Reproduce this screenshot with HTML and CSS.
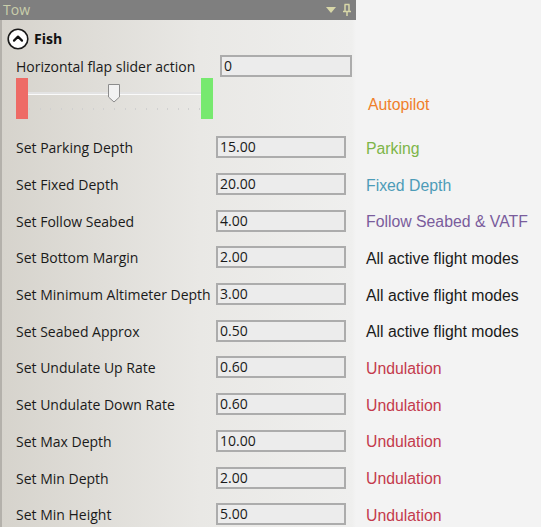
FILE: index.html
```html
<!DOCTYPE html>
<html>
<head>
<meta charset="utf-8">
<link rel="stylesheet" href="styles.css">
</head>
<body>
<div class="titlebar">
  <span class="title">Tow</span>
  <span class="tb-icons">
    <svg width="12" height="8" viewBox="0 0 12 8"><path d="M1 1 L11 1 L6 7 Z" fill="#d8d7a8"/></svg>
    <svg width="10" height="14" viewBox="0 0 10 14"><path d="M2.5 1.5 H7.5 M3 1.5 V8 M7 1.5 V8 M1 8.5 H9 M5 8.5 V13" stroke="#d8d7a8" stroke-width="1.5" fill="none"/></svg>
  </span>
</div>
<div class="panel">
  <div class="section-head">
    <svg class="collapse" width="22" height="22" viewBox="0 0 22 22"><circle cx="11" cy="11" r="9.8" fill="#fff" stroke="#1a1a1a" stroke-width="1.6"/><path d="M7 12.6 L11 8.6 L15 12.6" fill="none" stroke="#111" stroke-width="2.2" stroke-linecap="round" stroke-linejoin="round"/></svg>
    <span class="section-title">Fish</span>
  </div>
  <div class="flap">
    <div class="flap-left">
      <div class="flap-row">
        <span class="flap-label">Horizontal flap slider action</span>
        <div class="box box-wide">0</div>
      </div>
      <div class="slider">
        <div class="end end-red"></div>
        <div class="track">
          <div class="line"></div>
          <svg class="thumb" width="14" height="20" viewBox="0 0 14 20"><path d="M1.5 1.5 H12.5 V14 L7 19 L1.5 14 Z" fill="#f2f2f2" stroke="#8c8c8c" stroke-width="1"/></svg>
          <div class="ticks"><i></i><i></i><i></i><i></i><i></i><i></i><i></i><i></i><i></i><i></i><i></i><i></i><i></i><i></i><i></i><i></i><i></i></div>
        </div>
        <div class="end end-green"></div>
      </div>
    </div>
    <div class="mode autopilot">Autopilot</div>
  </div>
  <div class="rows">
    <span class="lbl">Set Parking Depth</span><div class="box">15.00</div><span class="mode parking">Parking</span>
    <span class="lbl">Set Fixed Depth</span><div class="box">20.00</div><span class="mode fixed">Fixed Depth</span>
    <span class="lbl">Set Follow Seabed</span><div class="box">4.00</div><span class="mode follow">Follow Seabed &amp; VATF</span>
    <span class="lbl">Set Bottom Margin</span><div class="box">2.00</div><span class="mode all">All active flight modes</span>
    <span class="lbl">Set Minimum Altimeter Depth</span><div class="box">3.00</div><span class="mode all">All active flight modes</span>
    <span class="lbl">Set Seabed Approx</span><div class="box">0.50</div><span class="mode all">All active flight modes</span>
    <span class="lbl">Set Undulate Up Rate</span><div class="box">0.60</div><span class="mode und">Undulation</span>
    <span class="lbl">Set Undulate Down Rate</span><div class="box">0.60</div><span class="mode und">Undulation</span>
    <span class="lbl">Set Max Depth</span><div class="box">10.00</div><span class="mode und">Undulation</span>
    <span class="lbl">Set Min Depth</span><div class="box">2.00</div><span class="mode und">Undulation</span>
    <span class="lbl">Set Min Height</span><div class="box">5.00</div><span class="mode und">Undulation</span>
  </div>
</div>
</body>
</html>
```
FILE: styles.css
```css
html, body {
  margin: 0;
  padding: 0;
}
body {
  width: 541px;
  height: 527px;
  overflow: hidden;
  background: linear-gradient(to right, #d6d3cc 0px, #e9e8e5 200px, #efefee 352px, #f3f3f3 356px, #f3f3f3 100%);
  font-family: "Open Sans", "Noto Sans", sans-serif;
  font-size: 14px;
  color: #1a1a1a;
}
.titlebar {
  width: 356px;
  height: 20px;
  background: #7f7f7f;
  display: flex;
  align-items: center;
  justify-content: space-between;
  box-sizing: border-box;
  padding: 0 4px 0 3px;
}
.title {
  color: #c9ceab;
  font-size: 14px;
  line-height: 20px;
}
.tb-icons {
  display: flex;
  align-items: center;
  gap: 5px;
}
.panel {
  border-left: 2px solid #b4b1ab;
  height: 507px;
  box-sizing: border-box;
}
.section-head {
  display: flex;
  align-items: center;
  gap: 5px;
  padding: 7px 0 0 5px;
  height: 23px;
}
.section-title {
  font-weight: bold;
  font-size: 14px;
  color: #111;
}
.flap {
  display: flex;
  align-items: flex-end;
  padding-top: 5px;
}
.flap-left {
  padding-left: 14px;
  width: 338px;
}
.flap-row {
  display: flex;
  align-items: center;
  height: 22px;
}
.flap-label {
  width: 204px;
}
.box {
  box-sizing: border-box;
  height: 22px;
  border: 2px solid #acacac;
  background: #ececec;
  padding-left: 2px;
  line-height: 18px;
  font-size: 14px;
}
.box-wide {
  width: 132px;
}
.slider {
  display: flex;
  height: 41px;
  margin-top: 1px;
  width: 197px;
}
.end {
  width: 12px;
  height: 41px;
}
.end-red { background: #ee6b66; }
.end-green { background: #77e96f; }
.track {
  flex: 1;
  position: relative;
}
.line {
  position: absolute;
  left: 0;
  right: 0;
  top: 14px;
  height: 2px;
  background: #e3e3e3;
  border-bottom: 1px solid #fafafa;
}
.thumb {
  position: absolute;
  left: 79px;
  top: 5px;
}
.ticks {
  position: absolute;
  left: 0;
  right: 0;
  top: 30px;
  display: flex;
  justify-content: space-between;
  padding: 0 1px;
}
.ticks i {
  display: block;
  width: 1px;
  height: 2px;
  background: #d0d0d0;
}
.mode {
  font-family: "Liberation Sans", Arial, sans-serif;
  font-size: 15.8px;
}
.autopilot {
  color: #f07f2b;
  margin-left: 14px;
  margin-bottom: 5px;
}
.rows {
  display: grid;
  grid-template-columns: 200px 130px auto;
  grid-auto-rows: 36.7px;
  align-items: center;
  column-gap: 0;
  padding-left: 14px;
  margin-top: 10px;
}
.rows .lbl {
  padding-top: 1px;
}
.rows .box {
  width: 130px;
}
.rows .mode {
  padding-left: 20px;
  padding-top: 3px;
}
.parking { color: #7db548; }
.fixed { color: #4d9cb8; }
.follow { color: #7a5c9c; }
.all { color: #1a1a1a; }
.und { color: #c43a4d; }
```
